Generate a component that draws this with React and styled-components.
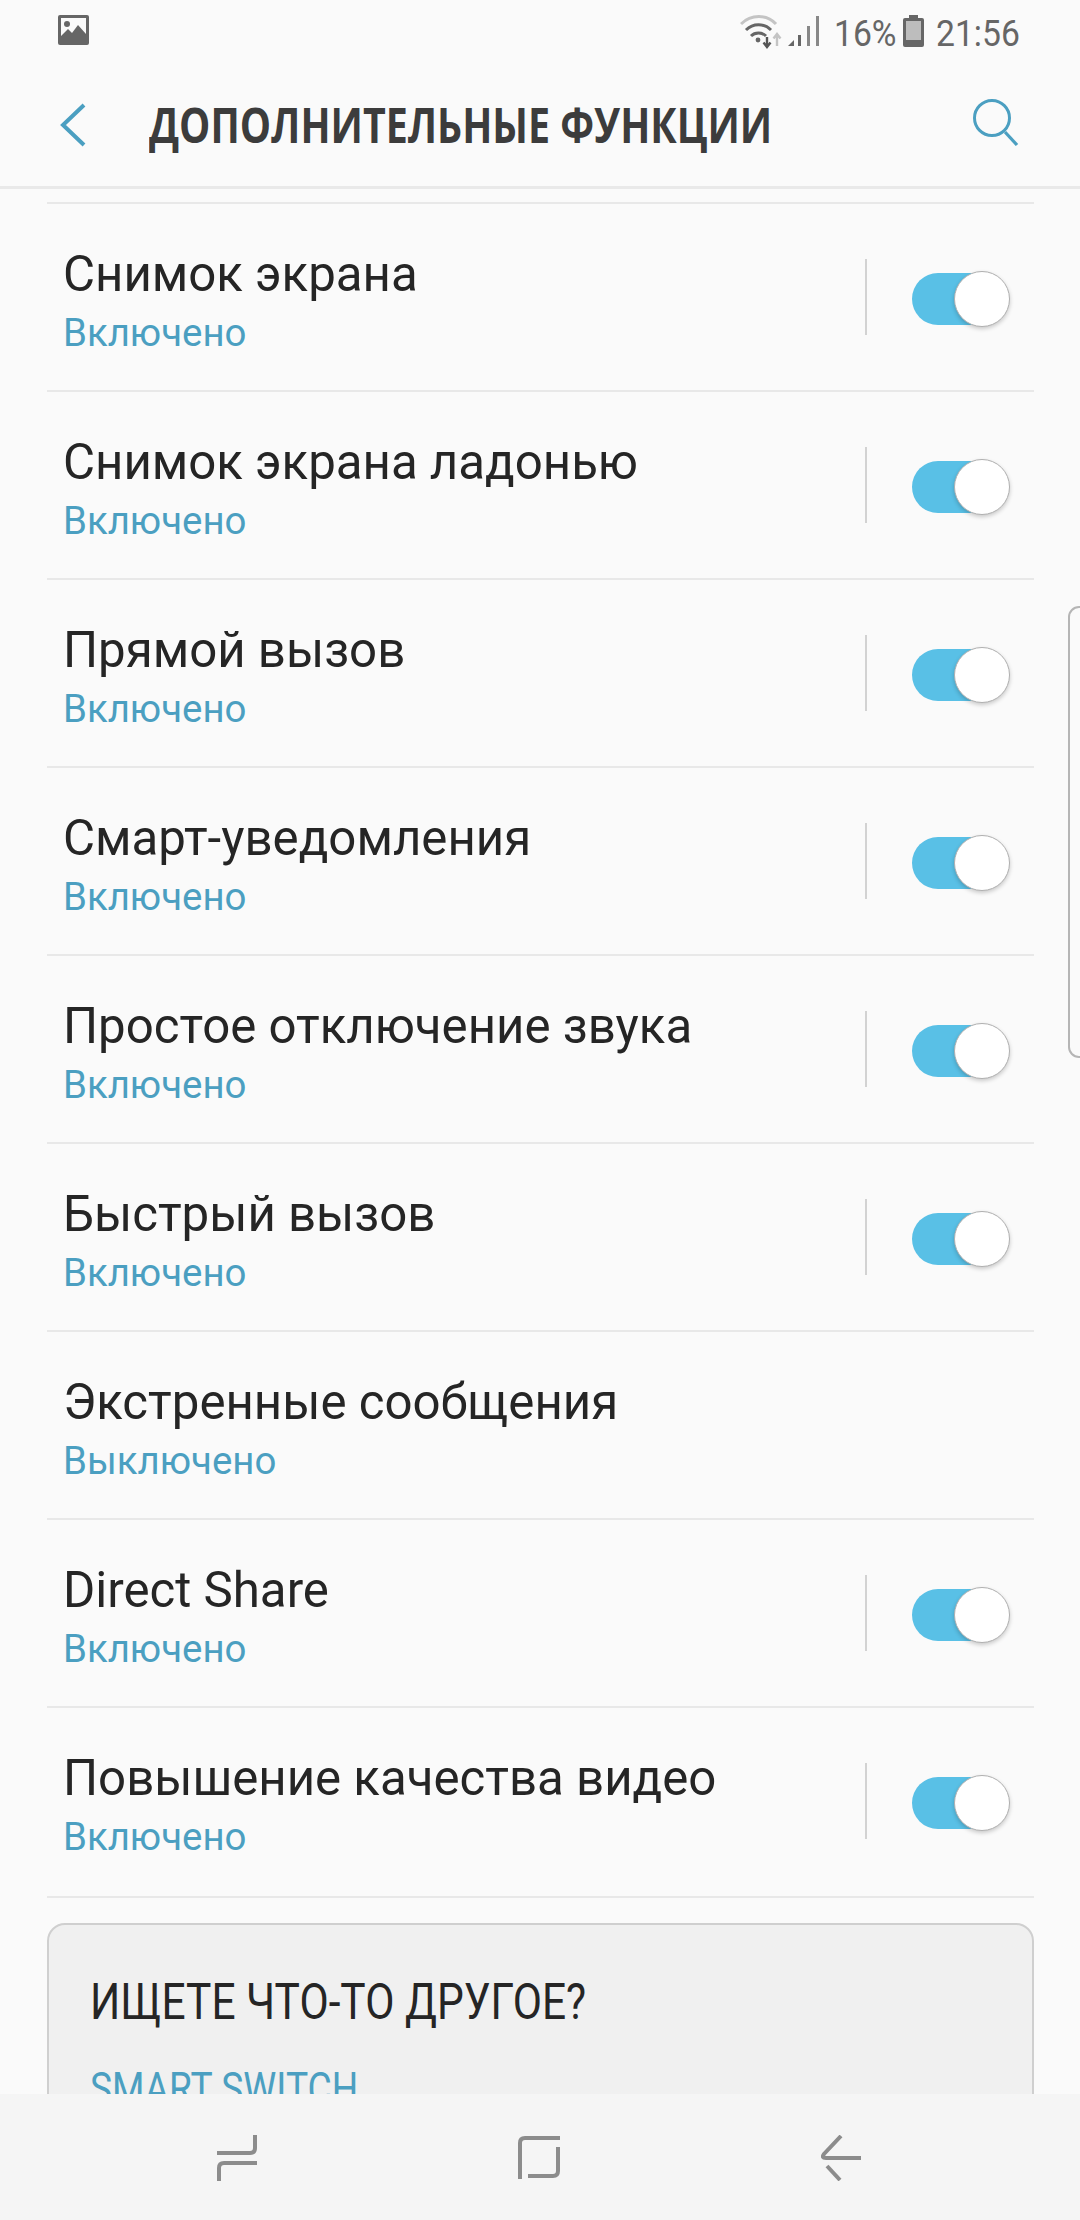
import React from "react";
import styled, { createGlobalStyle } from "styled-components";

const Global = createGlobalStyle`
  html, body { margin: 0; padding: 0; background: #fafafa; }
  * { box-sizing: border-box; }
`;

const Screen = styled.div`
  position: relative;
  width: 1080px;
  height: 2220px;
  overflow: hidden;
  display: flex;
  flex-direction: column;
  background: #fafafa;
  font-family: Roboto, "Noto Sans", sans-serif;
`;

const StatusBar = styled.div`
  height: 64px;
  flex: none;
  display: flex;
  align-items: flex-start;
  padding: 15px 62px 0 58px;
  color: #666;
`;
const StatusRight = styled.div`
  margin-left: auto;
  display: flex;
  align-items: flex-start;
  height: 34px;
`;
const StatusText = styled.span`
  display: inline-block;
  font-size: 37px;
  line-height: 37px;
  color: #666;
  width: ${(p) => p.$w}px;
  margin: 0 ${(p) => p.$mr || 0}px 0 ${(p) => p.$ml || 0}px;
  white-space: nowrap;
  transform: scaleX(${(p) => p.$sx});
  transform-origin: left center;
`;
const SignalGap = styled.span`
  width: 4px;
  flex: none;
`;

const Header = styled.header`
  height: 125px;
  flex: none;
  display: flex;
  align-items: center;
  padding: 0 60px;
  border-bottom: 3px solid #e9e9e9;
  position: relative;
`;
const HeaderTitle = styled.h1`
  margin: 0 0 0 63px;
  font-family: "Open Sans", sans-serif;
  font-weight: 700;
  font-size: 48px;
  line-height: 60px;
  color: #3c3c3c;
  white-space: nowrap;
  transform: scaleX(0.82);
  transform-origin: left center;
`;
const SearchWrap = styled.div`
  margin-left: auto;
  margin-right: 1px;
  display: flex;
  position: relative;
  top: -3px;
`;

const List = styled.div`
  padding: 13px 46px 0 47px;
  flex: none;
`;
const Row = styled.div`
  height: 188px;
  border-top: 2px solid #e8e8e8;
  display: flex;
  align-items: center;
  padding: 0 29px 0 16px;
`;
const RowText = styled.div`
  flex: 1;
  min-width: 0;
  position: relative;
  top: 3.5px;
`;
const RowTitle = styled.div`
  font-size: 49.2px;
  line-height: 58px;
  color: #252525;
  white-space: nowrap;
`;
const RowSub = styled.div`
  font-size: 38.4px;
  line-height: 46px;
  margin-top: 7px;
  color: #4b9fc1;
  white-space: nowrap;
`;
const Sep = styled.div`
  width: 2px;
  height: 76px;
  background: #d2d2d2;
  flex: none;
`;
const Toggle = styled.div`
  position: relative;
  width: 93px;
  height: 52px;
  margin-left: 45px;
  flex: none;
  border-radius: 26px;
  background: #59c0e6;
  top: 2px;
`;
const Knob = styled.div`
  position: absolute;
  right: -5px;
  top: -2px;
  width: 56px;
  height: 56px;
  border-radius: 50%;
  background: #fff;
  border: 1.5px solid #b0b0b0;
  box-shadow: 0 2px 4px rgba(0, 0, 0, 0.2);
`;

const EndRule = styled.div`
  border-top: 2px solid #e8e8e8;
  margin-top: 2px;
`;

const Card = styled.section`
  margin: 25px 46px 0 47px;
  height: 300px;
  flex: none;
  border: 2px solid #cfcfcf;
  border-radius: 18px;
  background: #f0f0f0;
  padding: 47px 41px;
`;
const CardHeading = styled.div`
  font-size: 50px;
  line-height: 60px;
  font-weight: 400;
  color: #252525;
  white-space: nowrap;
  transform: scaleX(0.85);
  transform-origin: left center;
`;
const CardLink = styled.div`
  font-size: 44px;
  line-height: 54px;
  margin-top: 30px;
  color: #4b9fc1;
  white-space: nowrap;
  transform: scaleX(0.845);
  transform-origin: left center;
`;

const NavBar = styled.nav`
  position: absolute;
  left: 0;
  right: 0;
  bottom: 0;
  height: 126px;
  background: #f5f5f5;
  display: flex;
  align-items: flex-start;
  padding: 41px 218px 0 217px;
  justify-content: space-between;
`;

const EdgeHandle = styled.div`
  position: absolute;
  right: -10px;
  top: 606px;
  width: 22px;
  height: 452px;
  border: 2px solid #b5b5b5;
  border-radius: 14px;
  background: #fafafa;
`;

const IMG = () => (
  <svg width="31" height="30" viewBox="0 0 31 30">
    <rect width="31" height="30" rx="2" fill="#666" />
    <rect x="3" y="3" width="25" height="21" fill="#fafafa" />
    <circle cx="9" cy="9" r="3" fill="#666" />
    <path d="M3 24 L3 21 L10 14 L14 18 L20 10 L28 19 L28 24 Z" fill="#666" />
  </svg>
);

const Wifi = () => (
  <svg width="44" height="34" viewBox="0 0 44 34" fill="none">
    <path d="M1 9 C11 -1 27 -1 36 9" stroke="#c4c4c4" strokeWidth="3" />
    <path d="M6 15 C13 8 24 8 31 15" stroke="#666" strokeWidth="3" />
    <path d="M11 21 C15 17 22 17 26 21" stroke="#666" strokeWidth="3" />
    <circle cx="18" cy="25" r="2.4" fill="#666" />
    <path d="M27 22 V31 M23.5 27.5 L27 32 L30.5 27.5" stroke="#555" strokeWidth="2.4" />
    <path d="M37 31 V20 M33.5 23.5 L37 19 L40.5 23.5" stroke="#c4c4c4" strokeWidth="2.4" />
  </svg>
);

const Signal = () => (
  <svg width="32" height="32" viewBox="0 0 32 32">
    <path d="M0 31 L6 25 V31 Z" fill="#666" />
    <rect x="10" y="20" width="3" height="11" fill="#666" />
    <rect x="19" y="11" width="3" height="20" fill="#888" />
    <rect x="28" y="1" width="3" height="30" fill="#888" />
  </svg>
);

const Battery = () => (
  <svg width="21" height="32" viewBox="0 0 21 32">
    <rect x="6" y="0" width="9" height="3" fill="#666" />
    <rect x="0" y="3" width="21" height="29" rx="2" fill="#666" />
    <rect x="3" y="6" width="15" height="19" fill="#bdbdbd" />
  </svg>
);

const BackChevron = () => (
  <svg width="26" height="44" viewBox="0 0 26 44" fill="none">
    <path d="M24 2 L3 22 L24 42" stroke="#4b9fc1" strokeWidth="4" />
  </svg>
);

const Search = () => (
  <svg width="46" height="48" viewBox="0 0 46 48" fill="none">
    <circle cx="19" cy="20" r="17.5" stroke="#4b9fc1" strokeWidth="3" />
    <path d="M32 34 L44 47" stroke="#4b9fc1" strokeWidth="3.2" />
  </svg>
);

const Recents = () => (
  <svg width="40" height="46" viewBox="0 0 40 46" fill="none" stroke="#8c8c8c" strokeWidth="4">
    <path d="M0 18 H33 Q38 18 38 13 V0" />
    <path d="M40 28 H7 Q2 28 2 33 V46" />
  </svg>
);
const Home = () => (
  <svg width="43" height="44" viewBox="0 0 43 44" fill="none" stroke="#8c8c8c" strokeWidth="4">
    <path d="M42 3 H7 Q2 3 2 8 V44" />
    <path d="M40 12 V36 Q40 41 35 41 H10" />
  </svg>
);
const Back = () => (
  <svg width="41" height="46" viewBox="0 0 41 46" fill="none" stroke="#8c8c8c" strokeWidth="4">
    <path d="M20 1 L3 19 Q0 23 5 23 H40" />
    <path d="M6 31 L19 45" />
  </svg>
);

const rows = [
  ["Снимок экрана", "Включено", true],
  ["Снимок экрана ладонью", "Включено", true],
  ["Прямой вызов", "Включено", true],
  ["Смарт-уведомления", "Включено", true],
  ["Простое отключение звука", "Включено", true],
  ["Быстрый вызов", "Включено", true],
  ["Экстренные сообщения", "Выключено", false],
  ["Direct Share", "Включено", true],
  ["Повышение качества видео", "Включено", true],
];

export default function App() {
  return (
    <Screen>
      <Global />
      <StatusBar>
        <IMG />
        <StatusRight>
          <Wifi />
          <SignalGap />
          <Signal />
          <StatusText $w={69} $sx={0.91} $ml={14}>16%</StatusText>
          <Battery />
          <StatusText $w={82} $sx={0.91} $ml={12}>21:56</StatusText>
        </StatusRight>
      </StatusBar>
      <Header>
        <BackChevron />
        <HeaderTitle>ДОПОЛНИТЕЛЬНЫЕ ФУНКЦИИ</HeaderTitle>
        <SearchWrap><Search /></SearchWrap>
      </Header>
      <List>
        {rows.map(([t, s, on]) => (
          <Row key={t}>
            <RowText>
              <RowTitle>{t}</RowTitle>
              <RowSub>{s}</RowSub>
            </RowText>
            {on && <Sep />}
            {on && <Toggle><Knob /></Toggle>}
          </Row>
        ))}
        <EndRule />
      </List>
      <Card>
        <CardHeading>ИЩЕТЕ ЧТО-ТО ДРУГОЕ?</CardHeading>
        <CardLink>SMART SWITCH</CardLink>
      </Card>
      <EdgeHandle />
      <NavBar>
        <Recents />
        <Home />
        <Back />
      </NavBar>
    </Screen>
  );
}
